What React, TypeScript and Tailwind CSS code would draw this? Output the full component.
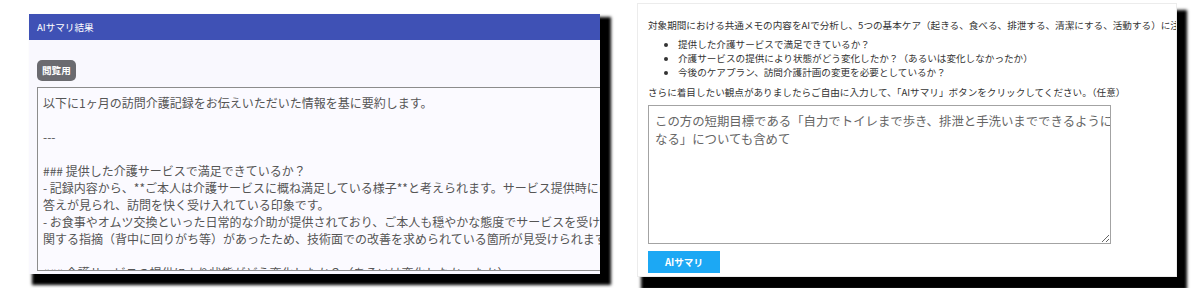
const font = "font-['Noto_Sans_CJK_JP','Noto_Sans',sans-serif]";

const summaryLines = [
  "以下に1ヶ月の訪問介護記録をお伝えいただいた情報を基に要約します。",
  "",
  "---",
  "",
  "### 提供した介護サービスで満足できているか？",
  "- 記録内容から、**ご本人は介護サービスに概ね満足している様子**と考えられます。サービス提供時には笑顔や受け",
  "答えが見られ、訪問を快く受け入れている印象です。",
  "- お食事やオムツ交換といった日常的な介助が提供されており、ご本人も穏やかな態度でサービスを受けています。ただし、体位変換に",
  "関する指摘（背中に回りがち等）があったため、技術面での改善を求められている箇所が見受けられます。",
  "",
  "### 介護サービスの提供により状態がどう変化したか？（あるいは変化しなかったか）",
];

const checkPoints = [
  "提供した介護サービスで満足できているか？",
  "介護サービスの提供により状態がどう変化したか？（あるいは変化しなかったか）",
  "今後のケアプラン、訪問介護計画の変更を必要としているか？",
];

function ResultPanel() {
  return (
    <section className="mt-[14px] w-[571px] h-[260px] shrink-0 bg-[#f9f8fe] overflow-hidden shadow-[7px_7px_3px_4px_#000]">
      <div className="h-[26px] bg-[#3f51b5] px-2 flex items-center text-[9.6px] text-white">
        AIサマリ結果
      </div>
      <div className="pt-[15px] pl-2">
        <span className="inline-flex items-center h-[21px] px-[5px] rounded-[5px] bg-[#6b6b70] text-white text-[9.6px] font-bold">
          閲覧用
        </span>
        <div className="mt-[6px] w-[600px] h-[184px] border border-[#8c8c8c] bg-[#fbfaff] px-[5px] py-[6px] overflow-hidden text-[12px] leading-[17px] text-[#555]">
          {summaryLines.map((line, i) => (
            <div key={i} className="whitespace-nowrap h-[17px]">
              {line}
            </div>
          ))}
        </div>
      </div>
    </section>
  );
}

function RequestPanel() {
  return (
    <section className="ml-[37px] mt-[3px] w-[540px] h-[274px] shrink-0 bg-white border border-[#ececec] overflow-hidden px-[10px] pt-[14px] text-[#333] shadow-[7px_10px_3px_3px_#000]">
      <p className="text-[9.6px] leading-[14px] whitespace-nowrap">
        対象期間における共通メモの内容をAIで分析し、5つの基本ケア（起きる、食べる、排泄する、清潔にする、活動する）に注目して要約します。
      </p>
      <ul className="mt-[5px] pl-[30px] list-disc text-[9.6px] leading-[14px]">
        {checkPoints.map((c) => (
          <li key={c} className="whitespace-nowrap">
            {c}
          </li>
        ))}
      </ul>
      <p className="mt-[6px] text-[9.6px] leading-[14px] whitespace-nowrap">
        さらに着目したい観点がありましたらご自由に入力して、「AIサマリ」ボタンをクリックしてください。（任意）
      </p>
      <textarea
        readOnly
        wrap="off"
        className={`${font} block mt-[6px] w-[463px] h-[139px] border border-[#a3a3a3] bg-white px-[6px] py-[6px] text-[12.4px] leading-[18px] text-[#666] outline-none overflow-hidden`}
        defaultValue={
          "この方の短期目標である「自力でトイレまで歩き、排泄と手洗いまでできるように\nなる」についても含めて"
        }
      />
      <button className="mt-[7px] w-[72px] h-[22px] bg-[#1ca8f4] text-white text-[9.6px] font-bold flex items-center justify-center">
        AIサマリ
      </button>
    </section>
  );
}

export default function App() {
  return (
    <div className={`${font} w-[1200px] h-[288px] bg-white overflow-hidden flex items-start pl-[29px]`}>
      <ResultPanel />
      <RequestPanel />
    </div>
  );
}
